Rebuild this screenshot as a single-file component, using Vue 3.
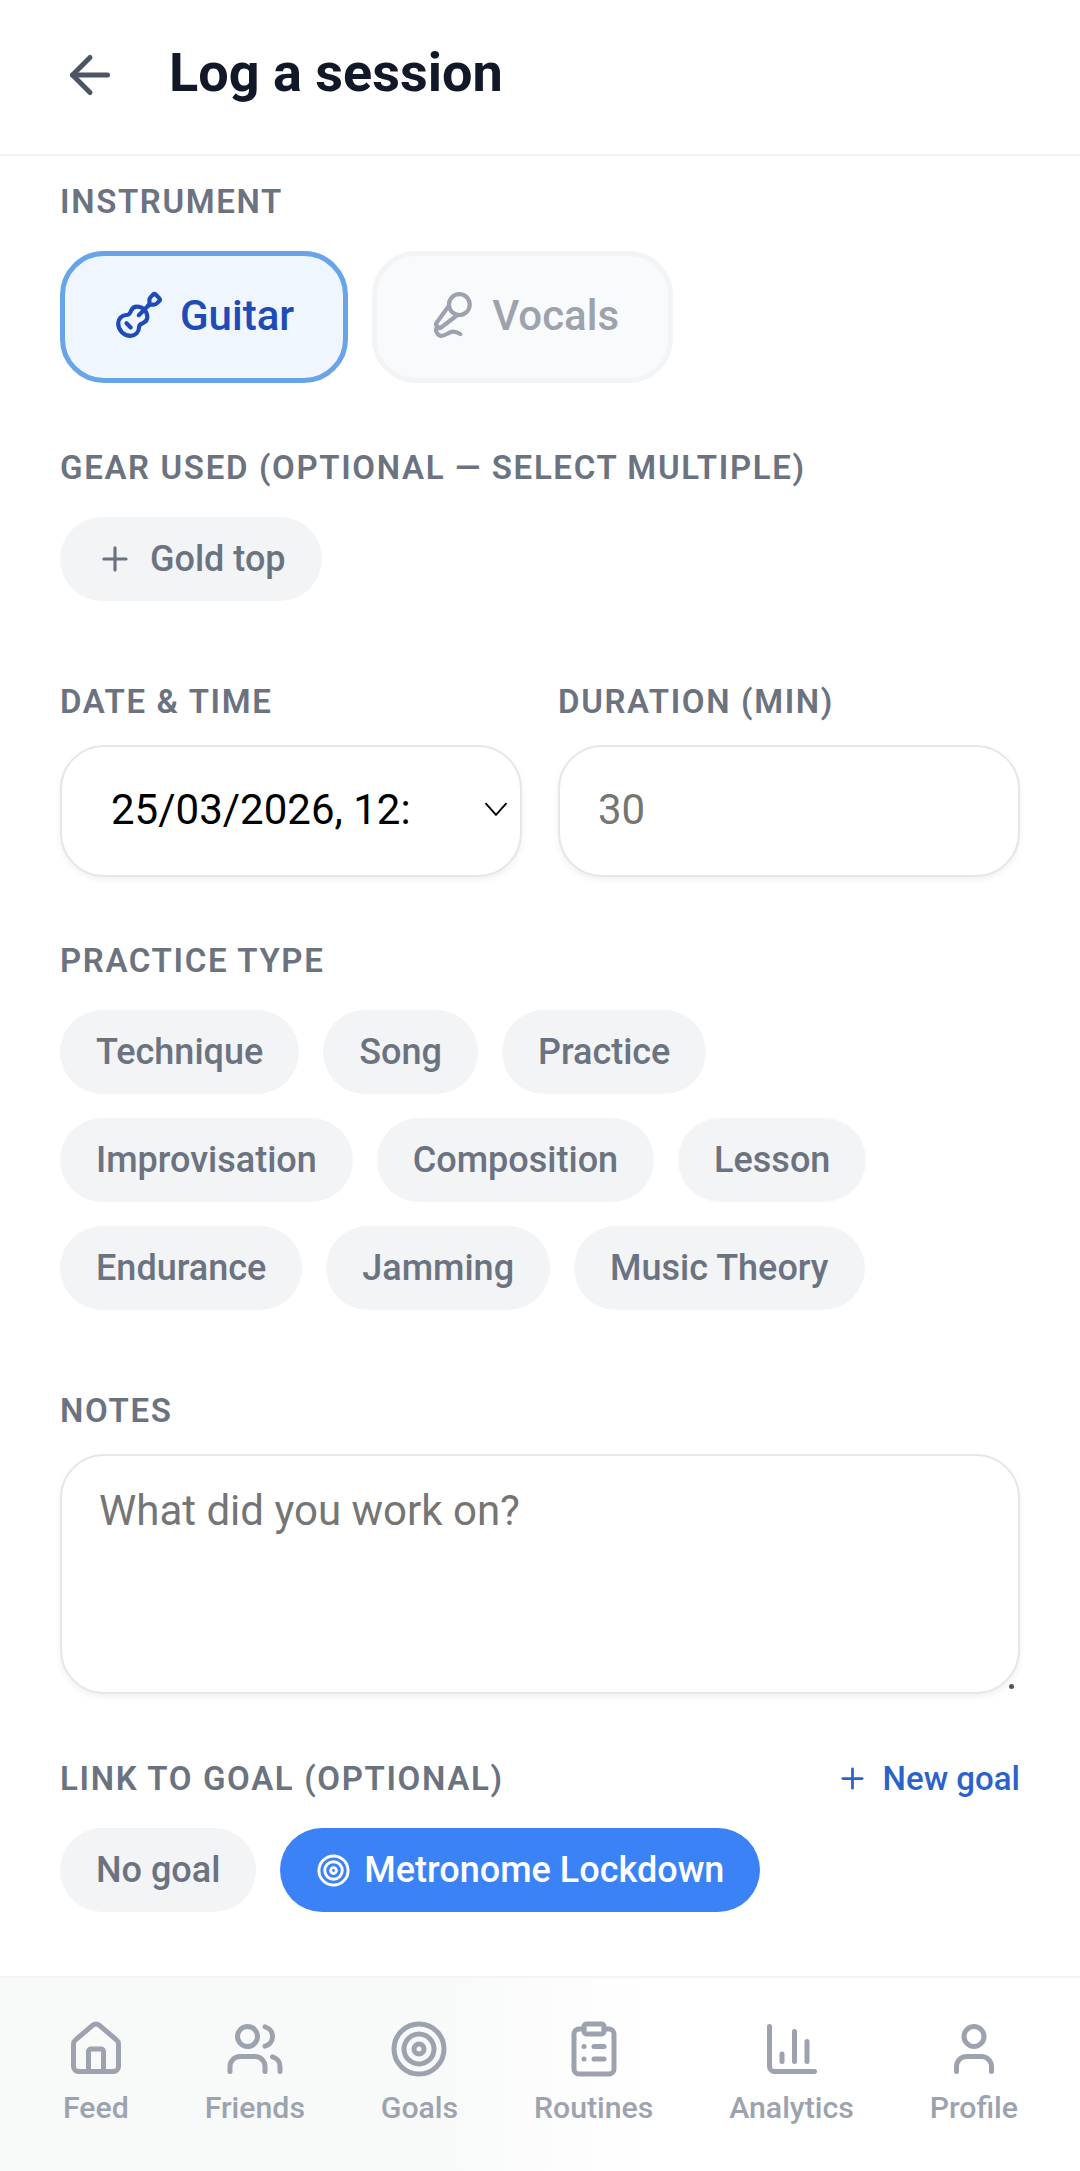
<template>
  <div class="page">
    <header class="topbar">
      <svg class="back" viewBox="0 0 24 24" fill="none" stroke="currentColor" stroke-width="2" stroke-linecap="round" stroke-linejoin="round">
        <path d="m12 19-7-7 7-7" />
        <path d="M19 12H5" />
      </svg>
      <h1>Log a session</h1>
    </header>

    <main class="form">
      <section class="block">
        <div class="label">INSTRUMENT</div>
        <div class="instruments">
          <button class="instrument active">
            <svg viewBox="0 0 24 24" fill="none" stroke="currentColor" stroke-width="2" stroke-linecap="round" stroke-linejoin="round">
              <path d="m11.9 12.1 4.514-4.514" />
              <path d="M20.1 2.3a1 1 0 0 0-1.4 0l-1.114 1.114A2 2 0 0 0 17 4.828v1.344a2 2 0 0 1-.586 1.414A2 2 0 0 1 17.828 7h1.344a2 2 0 0 0 1.414-.586L21.7 5.3a1 1 0 0 0 0-1.4z" />
              <path d="m6 16 2 2" />
              <path d="M8.2 9.9C8.7 8.8 9.8 8 11 8c2.8 0 5 2.2 5 5 0 1.2-.8 2.3-1.9 2.8l-.9.4A2 2 0 0 0 12 18a4 4 0 0 1-4 4c-3.3 0-6-2.7-6-6a4 4 0 0 1 4-4 2 2 0 0 0 1.8-1.2z" />
            </svg>
            Guitar
          </button>
          <button class="instrument">
            <svg viewBox="0 0 24 24" fill="none" stroke="currentColor" stroke-width="2" stroke-linecap="round" stroke-linejoin="round">
              <path d="m11 7.601-5.994 8.19a1 1 0 0 0 .1 1.298l.817.818a1 1 0 0 0 1.314.087L15.09 12" />
              <path d="M16.5 21.174C15.5 20.5 14.372 20 13 20c-2.058 0-3.928 2.356-6 2-2.072-.356-2.775-3.369-1.5-4.5" />
              <circle cx="16" cy="7" r="5" />
            </svg>
            Vocals
          </button>
        </div>
      </section>

      <section class="block block-wide">
        <div class="label">GEAR USED (OPTIONAL — SELECT MULTIPLE)</div>
        <div class="chips">
          <button class="chip">
            <svg class="plus" viewBox="0 0 24 24" fill="none" stroke="currentColor" stroke-width="2" stroke-linecap="round">
              <path d="M5 12h14" />
              <path d="M12 5v14" />
            </svg>
            Gold top
          </button>
        </div>
      </section>

      <section class="block two-col">
        <div>
          <div class="label label-tight">DATE &amp; TIME</div>
          <div class="field date-field">
            <span>25/03/2026, 12:</span>
            <svg class="caret" viewBox="0 0 24 24" fill="none" stroke="currentColor" stroke-width="2">
              <path d="m3 7 9 10 9-10" />
            </svg>
          </div>
        </div>
        <div>
          <div class="label label-tight">DURATION (MIN)</div>
          <input class="field duration" type="number" placeholder="30" />
        </div>
      </section>

      <section class="block block-wide">
        <div class="label">PRACTICE TYPE</div>
        <div class="chips">
          <button v-for="type in practiceTypes" :key="type" class="chip">{{ type }}</button>
        </div>
      </section>

      <section class="block">
        <div class="label label-notes">NOTES</div>
        <div class="notes-wrap">
          <textarea class="field notes" placeholder="What did you work on?"></textarea>
          <span class="resize-dot"></span>
        </div>
      </section>

      <section class="block">
        <div class="goal-head">
          <div class="label">LINK TO GOAL (OPTIONAL)</div>
          <a class="new-goal">
            <svg viewBox="0 0 24 24" fill="none" stroke="currentColor" stroke-width="2" stroke-linecap="round">
              <path d="M5 12h14" />
              <path d="M12 5v14" />
            </svg>
            New goal
          </a>
        </div>
        <div class="chips">
          <button class="chip">No goal</button>
          <button class="chip chip-on">
            <svg viewBox="0 0 24 24" fill="none" stroke="currentColor" stroke-width="2">
              <circle cx="12" cy="12" r="10" />
              <circle cx="12" cy="12" r="6" />
              <circle cx="12" cy="12" r="2" />
            </svg>
            Metronome Lockdown
          </button>
        </div>
      </section>
    </main>

    <nav class="tabs">
      <div v-for="tab in tabs" :key="tab.name" class="tab">
        <svg viewBox="0 0 24 24" fill="none" stroke="currentColor" stroke-width="2" stroke-linecap="round" stroke-linejoin="round">
          <path v-for="d in tab.paths" :key="d" :d="d" />
          <circle v-for="c in tab.circles" :key="c[2]" :cx="c[0]" :cy="c[1]" :r="c[2]" />
          <rect v-if="tab.rect" x="8" y="2" width="8" height="4" rx="1" />
        </svg>
        <span>{{ tab.name }}</span>
      </div>
    </nav>
  </div>
</template>

<script setup>
const practiceTypes = [
  'Technique',
  'Song',
  'Practice',
  'Improvisation',
  'Composition',
  'Lesson',
  'Endurance',
  'Jamming',
  'Music Theory'
]

const tabs = [
  {
    name: 'Feed',
    paths: [
      'M15 21v-8a1 1 0 0 0-1-1h-4a1 1 0 0 0-1 1v8',
      'M3 10a2 2 0 0 1 .709-1.528l7-5.999a2 2 0 0 1 2.582 0l7 5.999A2 2 0 0 1 21 10v9a2 2 0 0 1-2 2H5a2 2 0 0 1-2-2z'
    ]
  },
  {
    name: 'Friends',
    paths: [
      'M16 21v-2a4 4 0 0 0-4-4H6a4 4 0 0 0-4 4v2',
      'M22 21v-2a4 4 0 0 0-3-3.87',
      'M16 3.13a4 4 0 0 1 0 7.75'
    ],
    circles: [[9, 7, 4]]
  },
  {
    name: 'Goals',
    circles: [[12, 12, 10], [12, 12, 6], [12, 12, 2]]
  },
  {
    name: 'Routines',
    rect: true,
    paths: [
      'M16 4h2a2 2 0 0 1 2 2v14a2 2 0 0 1-2 2H6a2 2 0 0 1-2-2V6a2 2 0 0 1 2-2h2',
      'M12 11h4',
      'M12 16h4',
      'M8 11h.01',
      'M8 16h.01'
    ]
  },
  {
    name: 'Analytics',
    paths: ['M3 3v16a2 2 0 0 0 2 2h16', 'M18 17V9', 'M13 17V5', 'M8 17v-3']
  },
  {
    name: 'Profile',
    paths: ['M19 21v-2a4 4 0 0 0-4-4H9a4 4 0 0 0-4 4v2'],
    circles: [[12, 7, 4]]
  }
]
</script>

<style>
body {
  background: #fff;
}
</style>

<style scoped>
.page {
  height: 2171px;
  display: flex;
  flex-direction: column;
  font-family: Roboto, "Noto Sans", sans-serif;
  background: #fff;
  overflow: hidden;
}

.topbar {
  height: 150px;
  flex-shrink: 0;
  display: flex;
  align-items: center;
  padding: 0 0 4px 60px;
  border-bottom: 2px solid #f3f4f6;
}

.back {
  width: 60px;
  height: 60px;
  color: #4b5563;
  margin-right: 49px;
}

h1 {
  margin: 0 0 5px;
  font-size: 54px;
  font-weight: 700;
  color: #111827;
}

.form {
  flex: 1;
  padding: 23px 60px 0;
}

.block {
  margin-bottom: 62px;
}

.block-wide {
  margin-bottom: 78px;
}

.label {
  font-size: 33px;
  line-height: 46px;
  font-weight: 600;
  letter-spacing: 0.05em;
  color: #6b7280;
  margin-bottom: 26px;
}

.label-tight {
  margin-bottom: 20px;
}

.label-notes {
  margin-bottom: 20px;
}

.instruments {
  display: flex;
  gap: 24px;
}

.instrument {
  display: flex;
  align-items: center;
  justify-content: center;
  gap: 16px;
  height: 132px;
  padding: 0 49px 4px;
  box-sizing: border-box;
  border: 5.5px solid #f3f4f6;
  border-radius: 44px;
  background: #f9fafb;
  color: #9ca3af;
  font: 500 42px Roboto, sans-serif;
}

.instrument svg {
  width: 50px;
  height: 50px;
}

.instrument.active {
  border-color: #68a4e8;
  background: #eff6ff;
  color: #1e4bb5;
}

.chips {
  display: flex;
  flex-wrap: wrap;
  gap: 24px;
}

.chip {
  display: flex;
  align-items: center;
  height: 84px;
  padding: 0 36px;
  border: none;
  border-radius: 42px;
  background: #f3f4f6;
  color: #6b7280;
  font: 500 36px Roboto, sans-serif;
}

.plus {
  width: 38px;
  height: 38px;
  margin-right: 16px;
}

.chip-on {
  background: #3b82f6;
  color: #fff;
}

.chip-on svg {
  width: 35px;
  height: 35px;
  margin-right: 13px;
}

.two-col {
  display: grid;
  grid-template-columns: 462px 462px;
  gap: 36px;
  margin-bottom: 61px;
}

.field {
  display: block;
  box-sizing: border-box;
  width: 100%;
  border: 2.75px solid #e5e7eb;
  border-radius: 44px;
  background: #fff;
  box-shadow: 0 3px 6px rgba(0, 0, 0, 0.06);
  font: 400 42px Roboto, sans-serif;
  outline: none;
}

.field::placeholder {
  color: #757575;
}

.date-field {
  height: 132px;
  display: flex;
  align-items: center;
  justify-content: space-between;
  padding: 0 10px 4px 49px;
  color: #000;
}

.caret {
  width: 28px;
  height: 28px;
  stroke-width: 1.6;
}

.duration {
  height: 132px;
  padding: 0 38px 4px;
}

.notes-wrap {
  position: relative;
}

.notes {
  height: 240px;
  padding: 30px 37px;
  resize: none;
}

.resize-dot {
  position: absolute;
  right: 6px;
  bottom: 5px;
  width: 5px;
  height: 5px;
  border-radius: 50%;
  background: #555;
}

.goal-head {
  display: flex;
  justify-content: space-between;
  align-items: flex-start;
}

.new-goal {
  display: flex;
  align-items: center;
  height: 44px;
  gap: 14px;
  font-size: 33px;
  font-weight: 500;
  color: #2b63c9;
}

.new-goal svg {
  width: 33px;
  height: 33px;
}

.tabs {
  height: 195px;
  flex-shrink: 0;
  display: flex;
  justify-content: space-between;
  align-items: flex-start;
  padding: 41px 62px 0 63px;
  box-sizing: border-box;
  border-top: 2px solid #f3f4f6;
  background: linear-gradient(90deg, #f8f9f9 0%, #f8f9f9 40%, #ffffff 60%);
}

.tab {
  display: flex;
  flex-direction: column;
  align-items: center;
  gap: 11px;
  color: #9ca3af;
  font-size: 30.25px;
  font-weight: 500;
}

.tab svg {
  width: 60px;
  height: 60px;
}
</style>
